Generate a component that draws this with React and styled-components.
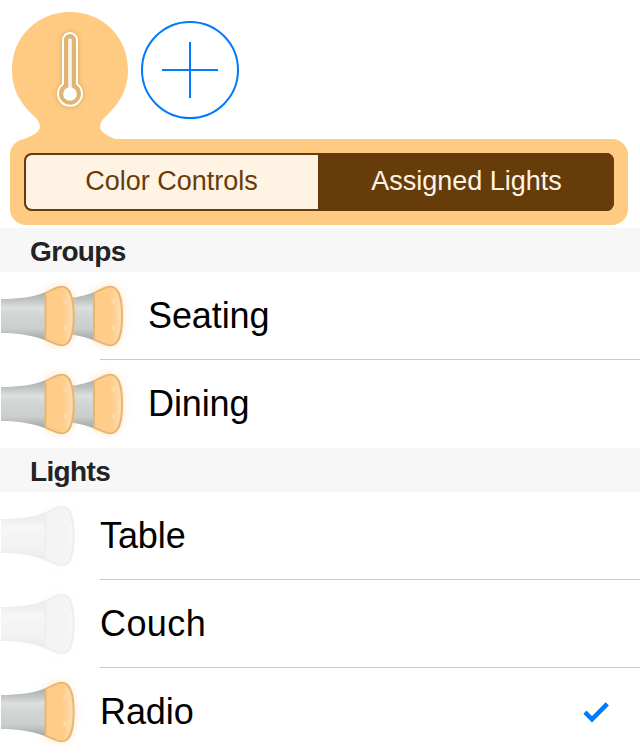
import React from "react"
import styled, { createGlobalStyle, css } from "styled-components"

const groups = ["Seating", "Dining"]

const lights = [
  { name: "Table", on: false },
  { name: "Couch", on: false, spacing: "0.4px" },
  { name: "Radio", on: true },
]

const Bulb = () => (
  <g>
    <path
      d="M44 20.5 C49 18.5 53 14 61 14 C70 14 74.500 27 74.500 44 C74.500 61 70 74 61 74 C53 74 49 69.500 44 67.500 Z"
      fill="#ffbd70"
      opacity="0.4"
      filter="url(#glow)"
    />
    <path d="M1 27 C18 27 34 25 46 20 V68.500 C34 63.500 18 61 1 61 Z" fill="url(#metal)" />
    <path
      d="M45.500 21 L55 16.300 C57.500 15.100 59.500 14.600 62 14.600 C70.500 14.600 73.700 28 73.700 44 C73.700 60 70.500 73.400 62 73.400 C59.500 73.400 57.500 72.900 55 71.700 L45.500 67.600 Z"
      fill="url(#cap)"
      stroke="#e6b672"
      strokeWidth="1.900"
      strokeLinejoin="round"
    />
    <path
      d="M65 18 C70 22 72 32 72 44 C72 56 70 66 65 70.500 C67.500 62 68.500 53 68.500 44 C68.500 35 67.500 26 65 18 Z"
      fill="#fff"
      opacity="0.12"
    />
    <circle cx="65" cy="30" r="3.500" fill="url(#spot)" />
    <circle cx="65" cy="56" r="3.500" fill="url(#spot)" />
  </g>
)

const Lamp = ({ double, off }) => (
  <LampArt $off={off} width={double ? 148 : 100} height="88" viewBox={double ? "0 0 148 88" : "0 0 100 88"}>
    <defs>
      <linearGradient id="metal" x1="0" y1="0" x2="0" y2="1">
        <stop offset="0" stopColor="#a9afad" />
        <stop offset="0.15" stopColor="#bdc1c0" />
        <stop offset="0.32" stopColor="#dcdfde" />
        <stop offset="0.5" stopColor="#d0d4d3" />
        <stop offset="0.75" stopColor="#cbcfce" />
        <stop offset="1" stopColor="#9fa5a3" />
      </linearGradient>
      <linearGradient id="cap" x1="0" y1="0" x2="1" y2="0">
        <stop offset="0" stopColor="#ffcb86" />
        <stop offset="0.6" stopColor="#ffcd8b" />
        <stop offset="1" stopColor="#ffd8a6" />
      </linearGradient>
      <radialGradient id="spot">
        <stop offset="0" stopColor="#fff" stopOpacity="0.28" />
        <stop offset="1" stopColor="#fff" stopOpacity="0" />
      </radialGradient>
      <filter id="glow" x="-80%" y="-50%" width="260%" height="200%">
        <feGaussianBlur stdDeviation="5" />
      </filter>
    </defs>
    {double && (
      <g transform="translate(48.5 0)">
        <Bulb />
      </g>
    )}
    <Bulb />
  </LampArt>
)

const SceneIcon = () => (
  <svg width="140" height="139" viewBox="0 0 140 139">
    <defs>
      <filter id="shade" x="-50%" y="-30%" width="200%" height="160%">
        <feGaussianBlur stdDeviation="2.500" />
      </filter>
    </defs>
    <path
      d="M70 12 C103 12 128 37 128 70 C128 91 118 105 106 116 C102 120 100 123 100 127 C100 131 107 136.500 117 139.500 H22 C33 136.500 40 131 40 127 C40 123 38 120 34 116 C22 105 12 91 12 70 C12 37 37 12 70 12 Z"
      fill="#ffcb82"
    />
    <path
      d="M63 84 V40 A7 7 0 0 1 77 40 V84 A12 12 0 1 1 63 84 Z"
      fill="#b47a32"
      stroke="#b47a32"
      strokeWidth="2"
      opacity="0.5"
      filter="url(#shade)"
    />
    <path
      d="M63 84 V40 A7 7 0 0 1 77 40 V84 A12 12 0 1 1 63 84 Z"
      fill="#e0b473"
      stroke="#fff"
      strokeWidth="2"
    />
    <path d="M70 40 V94" stroke="#f7f2ee" strokeWidth="3.600" strokeLinecap="round" />
    <circle cx="70" cy="94" r="6.800" fill="#fff" />
  </svg>
)

const PlusIcon = () => (
  <svg width="98" height="98" viewBox="0 0 98 98" fill="none" stroke="#007aff" strokeWidth="2">
    <circle cx="49" cy="49" r="48" />
    <path d="M21 49 H77 M49 21 V77" />
  </svg>
)

const CheckIcon = () => (
  <svg width="26" height="22" viewBox="0 0 26 22" fill="none" stroke="#007aff" strokeWidth="4.600">
    <path d="M1.900 11.200 L9 18.300 L24.300 2.900" />
  </svg>
)

const App = () => {
  return (
    <Screen>
      <GlobalStyle />
      <Scenes>
        <SceneIcon />
        <AddButton aria-label="Add scene">
          <PlusIcon />
        </AddButton>
      </Scenes>
      <Panel>
        <Segments>
          <Segment>Color Controls</Segment>
          <Segment $active>Assigned Lights</Segment>
        </Segments>
      </Panel>
      <SectionTitle>Groups</SectionTitle>
      {groups.map((name) => (
        <Row key={name}>
          <Lamp double />
          <Name>{name}</Name>
        </Row>
      ))}
      <SectionTitle>Lights</SectionTitle>
      {lights.map(({ name, on, spacing }) => (
        <Row key={name}>
          <Lamp off={!on} />
          <Name $spacing={spacing}>{name}</Name>
          {on && <CheckIcon />}
        </Row>
      ))}
    </Screen>
  )
}

const GlobalStyle = createGlobalStyle`
  * {
    box-sizing: border-box;
  }

  body {
    margin: 0;
    background: #fff;
    font-family: "Liberation Sans", Arial, sans-serif;
  }
`

const Screen = styled.main`
  width: 640px;
  height: 754px;
  overflow: hidden;
  background: #fff;
`

const Scenes = styled.div`
  display: flex;
  height: 139px;
`

const AddButton = styled.button`
  height: 98px;
  margin: 21px 0 0 1px;
  padding: 0;
  border: 0;
  background: none;
`

const Panel = styled.div`
  height: 86px;
  margin: 0 12px 3px 10px;
  padding: 14px;
  border-radius: 16px;
  background: #ffcb82;
`

const Segments = styled.div`
  display: flex;
  height: 58px;
  border-radius: 8px;
  background: #663d0a;
  overflow: hidden;
`

const Segment = styled.button`
  width: 294px;
  padding: 0 1px 2px 0;
  border: 2px solid #663d0a;
  border-right: 0;
  border-radius: 8px 0 0 8px;
  background: #fff3e4;
  color: #663d0a;
  font-family: inherit;
  font-size: 27px;

  ${({ $active }) =>
    $active &&
    css`
      flex: 1;
      border-radius: 0;
      background: #663d0a;
      color: #fff3e4;
    `}
`

const SectionTitle = styled.h2`
  height: 44px;
  margin: 0;
  padding: 2px 30px 0;
  background: #f7f7f7;
  color: #222325;
  font-size: 28px;
  font-weight: 700;
  line-height: 44px;
  letter-spacing: -0.65px;
`

const Row = styled.div`
  display: flex;
  align-items: center;
  height: 88px;
  padding-right: 31px;
  background: linear-gradient(#c8c7cc, #c8c7cc) 100px 87px / 540px 1px no-repeat;

  &:has(+ h2),
  &:last-child {
    background: none;
  }
`

const LampArt = styled.svg`
  flex: none;
  ${({ $off }) => $off && "filter: grayscale(1); opacity: 0.24;"}
`

const Name = styled.span`
  flex: 1;
  color: #000;
  font-size: 36px;
  line-height: 88px;
  letter-spacing: ${({ $spacing }) => $spacing || "-0.1px"};
`

export default App
